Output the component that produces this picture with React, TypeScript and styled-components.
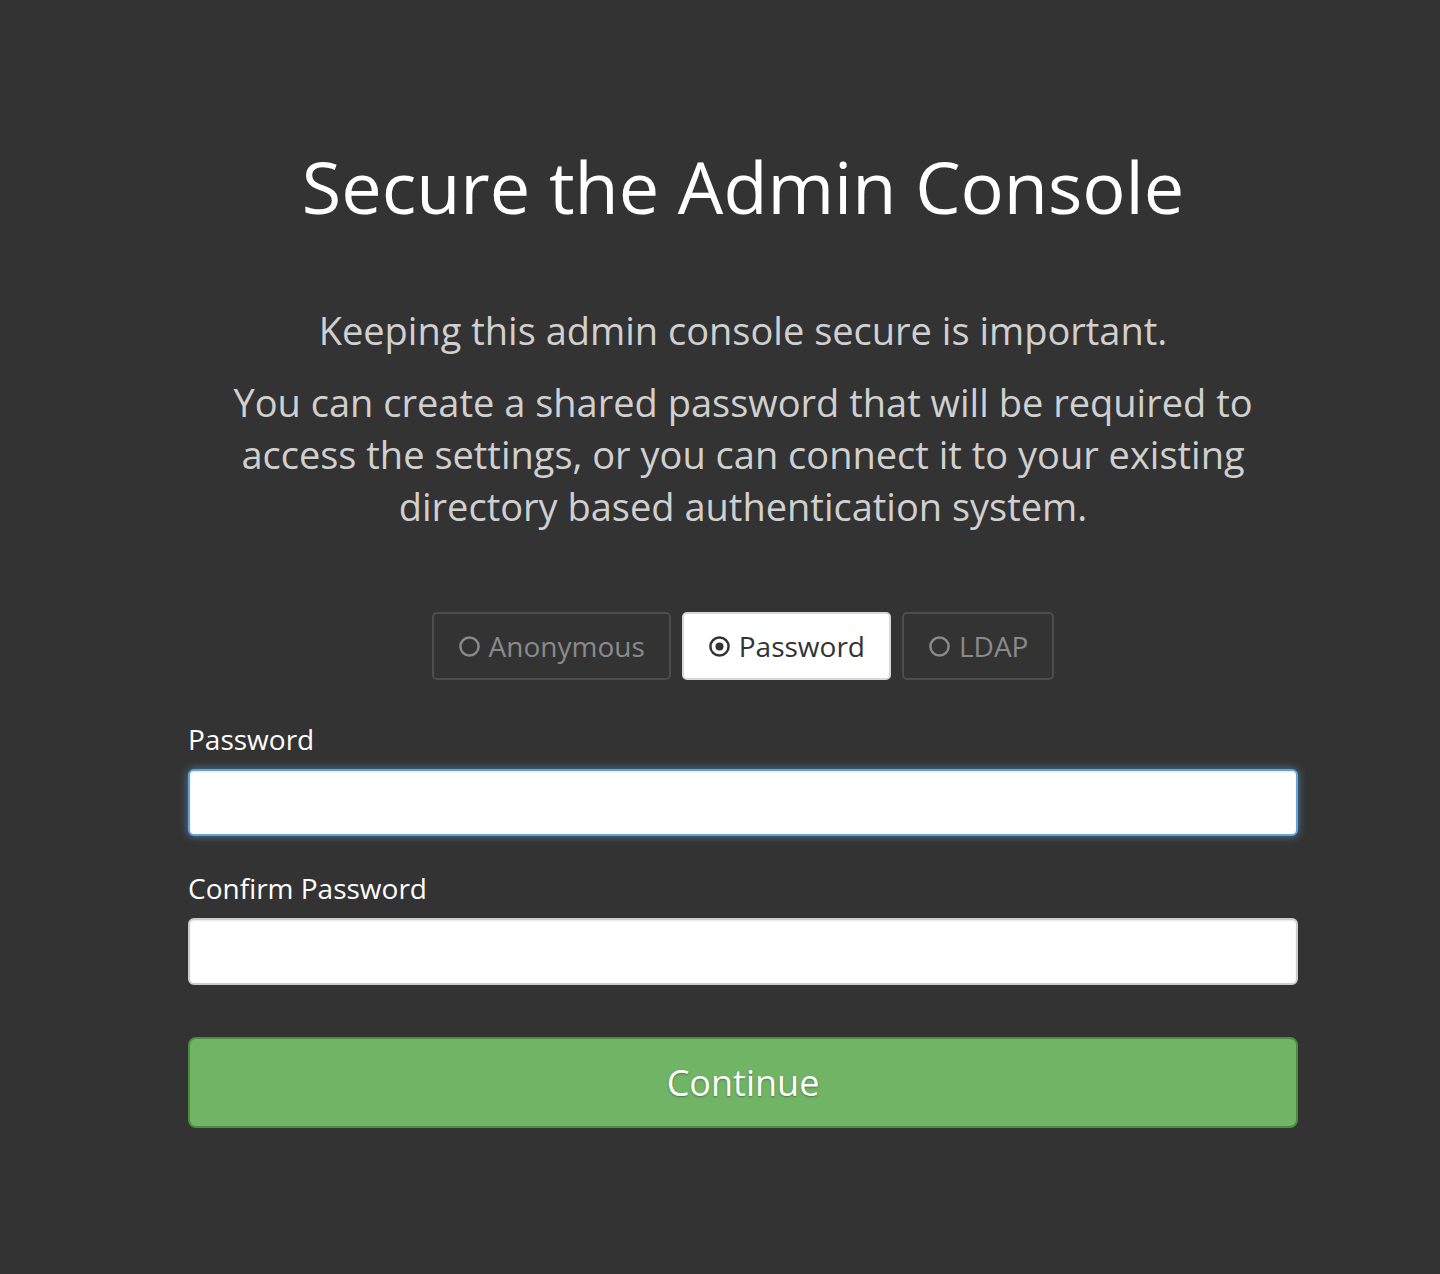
import { useState } from "react"
import styled, { createGlobalStyle } from "styled-components"

const GlobalStyle = createGlobalStyle`
  html, body {
    margin: 0;
    background: #333333;
  }
  body {
    font-family: "Open Sans", "Noto Sans", sans-serif;
    -webkit-font-smoothing: antialiased;
  }
`

type Mode = "anonymous" | "password" | "ldap"

const modes: { key: Mode; label: string }[] = [
  { key: "anonymous", label: "Anonymous" },
  { key: "password", label: "Password" },
  { key: "ldap", label: "LDAP" },
]

const RadioIcon = ({ checked }: { checked: boolean }) => (
  <svg width="23" height="23" viewBox="0 0 24 24">
    <circle cx="12" cy="12" r="9.5" fill="none" stroke="currentColor" strokeWidth="2.6" />
    {checked && <circle cx="12" cy="12" r="4.2" fill="currentColor" />}
  </svg>
)

const App = () => {
  const [mode, setMode] = useState<Mode>("password")

  return (
    <Page>
      <GlobalStyle />
      <Content>
        <Title>Secure the Admin Console</Title>
        <Lead>Keeping this admin console secure is important.</Lead>
        <Text>
          You can create a shared password that will be required to access the settings, or you
          can connect it to your existing directory based authentication system.
        </Text>

        <ModeGroup>
          {modes.map(m => (
            <ModeButton key={m.key} active={mode === m.key} onClick={() => setMode(m.key)}>
              <RadioIcon checked={mode === m.key} />
              {m.label}
            </ModeButton>
          ))}
        </ModeGroup>

        <Form onSubmit={e => e.preventDefault()}>
          <Field>
            <Label htmlFor="pw">Password</Label>
            <Input id="pw" type="password" focused />
          </Field>
          <Field>
            <Label htmlFor="pw2">Confirm Password</Label>
            <Input id="pw2" type="password" />
          </Field>
          <Submit type="submit">Continue</Submit>
        </Form>
      </Content>
    </Page>
  )
}

export default App


const Page = styled.div`
  min-height: 1274px;
  padding-left: 46px;
  box-sizing: border-box;
`

const Content = styled.main`
  width: 1110px;
  margin: 0 auto;
  padding-top: 142px;
  display: flex;
  flex-direction: column;
  align-items: center;
`

const Title = styled.h1`
  margin: 0;
  font-size: 72px;
  font-weight: 400;
  line-height: 88px;
  color: #ffffff;
`

const Lead = styled.p`
  margin: 74px 0 0;
  font-size: 38px;
  line-height: 52px;
  color: #d0d0d0;
  text-align: center;
`

const Text = styled.p`
  margin: 20px 0 0;
  max-width: 1060px;
  font-size: 38px;
  line-height: 52px;
  color: #d0d0d0;
  text-align: center;
`

const ModeGroup = styled.div`
  margin-top: 80px;
  display: flex;
  gap: 11px;
`

type ModeButtonProps = {
  active: boolean
}
const ModeButton = styled.button<ModeButtonProps>`
  height: 68px;
  padding: 0 24px;
  display: flex;
  align-items: center;
  gap: 8px;
  font-family: inherit;
  font-size: 28px;
  border-radius: 5px;
  cursor: pointer;
  border: 2px solid ${p => (p.active ? "#d8d8d8" : "#4d4d4d")};
  background: ${p => (p.active ? "#ffffff" : "transparent")};
  color: ${p => (p.active ? "#333333" : "#8a8a8a")};
`

const Form = styled.form`
  align-self: stretch;
  margin-top: 39px;
  display: flex;
  flex-direction: column;
`

const Field = styled.div`
  display: flex;
  flex-direction: column;
  margin-bottom: 32px;
`

const Label = styled.label`
  font-size: 28px;
  line-height: 40px;
  color: #ffffff;
  margin-bottom: 10px;
`

type InputProps = {
  focused?: boolean
}
const Input = styled.input<InputProps>`
  height: 67px;
  box-sizing: border-box;
  border-radius: 6px;
  background: #ffffff;
  font-size: 28px;
  padding: 0 16px;
  outline: none;
  border: 2px solid ${p => (p.focused ? "#66a1e0" : "#cccccc")};
  box-shadow: ${p =>
    p.focused
      ? "inset 0 1px 2px rgba(0,0,0,0.1), 0 0 8px rgba(102,175,233,0.6)"
      : "inset 0 1px 2px rgba(0,0,0,0.1)"};
`

const Submit = styled.button`
  margin-top: 20px;
  height: 91px;
  border-radius: 8px;
  border: 2px solid #4c8c40;
  background: #71b466;
  color: #ffffff;
  font-family: inherit;
  font-size: 36px;
  text-shadow: 0 1px 2px rgba(0,0,0,0.35);
  cursor: pointer;
`
